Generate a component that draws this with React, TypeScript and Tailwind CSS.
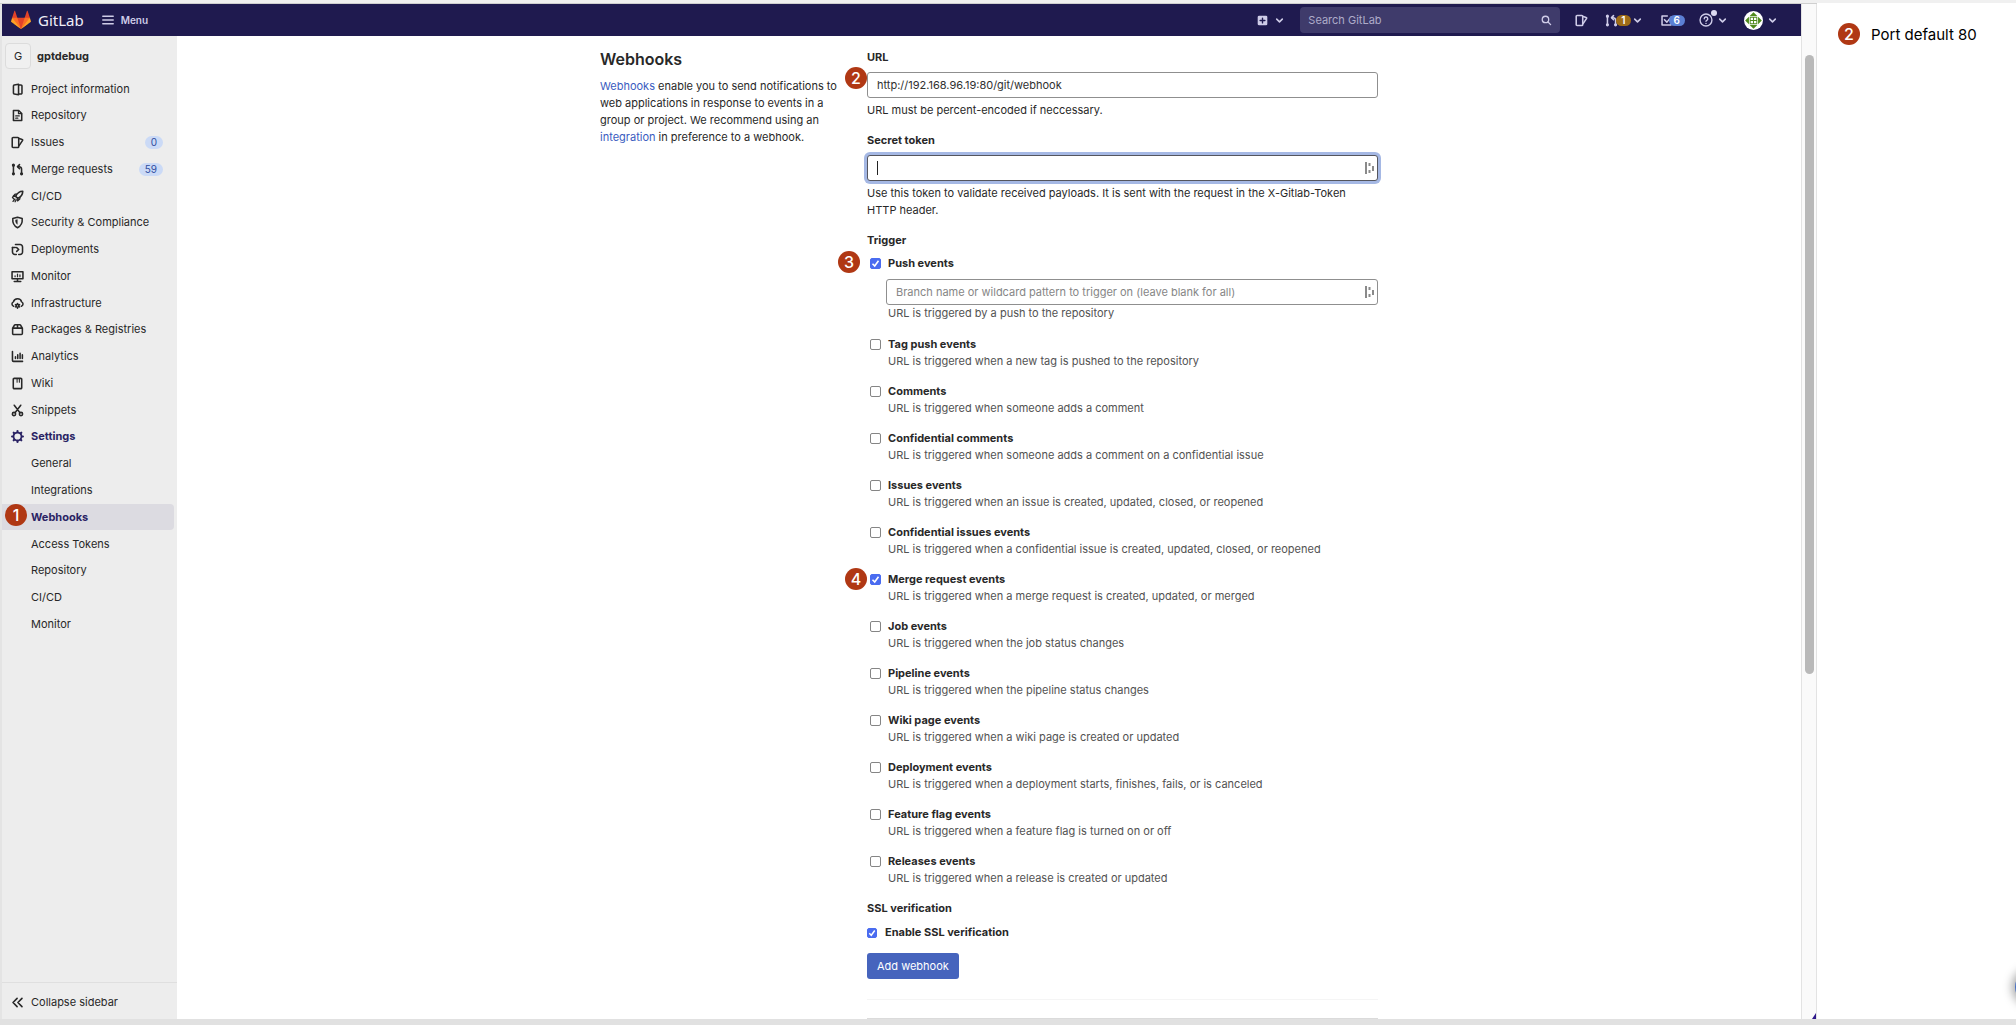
import type { ReactNode } from "react";

function Svg({ className, children }: { className?: string; children: ReactNode }) {
  return (
    <svg
      viewBox="0 0 16 16"
      aria-hidden="true"
      className={className ?? "size-[13px] shrink-0"}
      fill="none"
      stroke="currentColor"
      strokeWidth="1.9"
      strokeLinecap="round"
      strokeLinejoin="round"
    >
      {children}
    </svg>
  );
}

const issuesIcon = (
  <>
    <path d="M2.500 1.900h6a1 1 0 0 1 1 1v10.200a1 1 0 0 1-1 1h-6a1 1 0 0 1-1-1V2.900a1 1 0 0 1 1-1z" />
    <path d="M10 3l3.800 1.300a.8.8 0 0 1 .5 1.100L10.200 11.500" />
  </>
);

const mergeIcon = (
  <>
    <path d="M3 3v10M13 13V7.500a3 3 0 0 0-3-3H8.500" />
    <path d="M10.500 2L8 4.500 10.500 7" />
    <circle cx="3" cy="2.700" r="1" fill="currentColor" />
    <circle cx="3" cy="13.300" r="1" fill="currentColor" />
    <circle cx="13" cy="13.300" r="1" fill="currentColor" />
  </>
);

const icons: Record<string, ReactNode> = {
  project: (
    <>
      <path d="M9.300 1.600v12.800L4 13.500a1.200 1.200 0 0 1-1-1.200V3.700a1.200 1.200 0 0 1 1-1.200z" />
      <path d="M9.500 2.500h2.800a1.200 1.200 0 0 1 1.200 1.200v8.600a1.200 1.200 0 0 1-1.200 1.200H9.500" />
    </>
  ),
  repository: (
    <>
      <path d="M3 1.800h6.500L13.200 5.500v8.700H3z" />
      <path d="M9.200 2v3.800H13M5.800 8.500h4.400M5.800 11.300h2.600" strokeWidth="1.500" />
    </>
  ),
  issues: issuesIcon,
  merge: mergeIcon,
  rocket: (
    <>
      <path d="M14.500 1.500c-4 0-7 2.300-8.800 6.300l2.500 2.500c4-1.800 6.300-4.800 6.300-8.800z" />
      <path d="M5.800 7.500L2.500 8 5 5.200l2-.2M8.500 10.200L8 13.500l2.800-2.500.2-2M4 11.500L1.800 9.300M4.800 11.200L2.500 14M6.500 12L5 14.500" strokeWidth="1.600" />
    </>
  ),
  shield: (
    <>
      <path d="M8 1.500l5.800 1.700c.4 5.300-1.300 9-5.800 11.300C3.500 12.200 1.800 8.500 2.200 3.200z" />
      <path d="M7.800 4.500v5.800C6.300 9 5.500 7.500 5.500 5.300z" fill="currentColor" strokeWidth="0.500" />
    </>
  ),
  deployments: (
    <>
      <path d="M5.500 1.900h5.700a3 3 0 0 1 3 3v6.200a3 3 0 0 1-3 3H9.500M6.500 14.100H4.800a3 3 0 0 1-3-3V5.500" />
      <path d="M1.800 5.500h3.500M7 5.700L9.500 8 7 10.300" />
    </>
  ),
  monitor: (
    <>
      <path d="M1.300 2.200h13.400v8.600H1.300zM4 14.200h8M8 11v3" />
      <path d="M5 7.200v1M8 5v3.200M11 6v2.200" strokeWidth="1.500" />
    </>
  ),
  cloud: (
    <>
      <path d="M3.200 11.300A2.800 2.800 0 0 1 3 6c.6-2.300 2.700-3.800 5-3.800S12.500 3.700 13 6a2.800 2.800 0 0 1-.2 5.300" />
      <circle cx="8" cy="10.800" r="1.700" />
      <path d="M8 8v.6M8 13v.7M5.500 9.400l.6.300M10.500 9.400l-.6.300M5.500 12.200l.6-.3M10.500 12.200l-.6-.3" />
    </>
  ),
  package: (
    <path d="M2 6.300h12v6.500a1.300 1.300 0 0 1-1.300 1.300H3.300A1.300 1.300 0 0 1 2 12.800zM2.200 6l2-3.200a1.300 1.300 0 0 1 1-.7h5.600a1.300 1.300 0 0 1 1 .7l2 3.200M8 2.300V6" />
  ),
  chart: <path d="M1.800 1.800v11a1.200 1.200 0 0 0 1.200 1.200h11.200M5.500 8.300v2.200M8.300 6v4.500M11.200 4v6.500M14 6v4.500" />,
  book: (
    <>
      <path d="M4 1.700h8a1.200 1.200 0 0 1 1.200 1.200v10.200a1.200 1.200 0 0 1-1.200 1.200H4a1.200 1.200 0 0 1-1.200-1.200V2.900A1.200 1.200 0 0 1 4 1.700z" />
      <path d="M7.500 2v4.500M10.300 2v4.500" strokeWidth="1.300" />
    </>
  ),
  snippets: (
    <>
      <path d="M4 1.500l6.800 9M12 1.500L5.200 10.500" />
      <circle cx="3.700" cy="12.300" r="2" />
      <circle cx="12.300" cy="12.300" r="2" />
    </>
  ),
  settings: (
    <>
      <circle cx="8" cy="8" r="4.900" strokeWidth="2.200" />
      <path
        d="M8 1.300v1M8 13.700v1M1.300 8h1M13.700 8h1M3.300 3.300l.7.700M12 12l.7.700M3.300 12.700l.7-.7M12 4l.7-.7"
        strokeWidth="2.600"
      />
    </>
  ),
  collapse: <path d="M7.500 3L2.500 8l5 5M13.500 3l-5 5 5 5" strokeWidth="2" />,
};

function Chevron() {
  return (
    <Svg className="size-[9px] shrink-0">
      <path d="M3 5.500L8 10.500l5-5" strokeWidth="2.800" />
    </Svg>
  );
}

function Tanuki() {
  return (
    <svg viewBox="0 0 36 36" aria-hidden="true" className="size-5">
      <path fill="#e24329" d="M2 14l9.380 9v-9l-4-12.280c-.205-.632-1.176-.632-1.380 0z" />
      <path fill="#e24329" d="M34 14l-9.380 9v-9l4-12.280c.205-.632 1.176-.632 1.380 0z" />
      <path fill="#e24329" d="M18 34.380L3 14h30z" />
      <path fill="#fc6d26" d="M18 34.380L11.380 14H2l4 11z" />
      <path fill="#fc6d26" d="M18 34.380L24.620 14H34l-4 11z" />
      <path fill="#fca326" d="M2 14L.1 20.160c-.18.565 0 1.200.5 1.560l17.420 12.660z" />
      <path fill="#fca326" d="M34 14l1.900 6.160c.18.565 0 1.200-.5 1.560L18 34.380z" />
    </svg>
  );
}

function Step({ n, className }: { n: number; className?: string }) {
  return (
    <span
      className={`flex size-[22px] items-center justify-center rounded-full bg-[#b03814] text-base font-medium text-white ${className ?? ""}`}
    >
      {n}
    </span>
  );
}

function Header() {
  return (
    <header className="flex h-8 shrink-0 items-center bg-[#1f1a4f] pr-6 pl-[9px] text-[#cfcce8]">
      <a href="#home" className="flex items-center gap-[7px]">
        <Tanuki />
        <span className="font-['Noto_Sans',sans-serif] text-[15px] font-normal text-[#f0eef8]">GitLab</span>
      </a>
      <button type="button" className="ml-[18px] flex items-center gap-[7px] text-[10px] font-semibold">
        <Svg className="size-3">
          <path d="M1 3h14M1 8h14M1 13h14" strokeWidth="1.800" />
        </Svg>
        Menu
      </button>
      <div className="ml-auto flex items-center">
        <button type="button" aria-label="Create new" className="flex items-center gap-[7px]">
          <Svg className="size-[11px]">
            <rect x="1" y="1" width="14" height="14" rx="2" fill="currentColor" stroke="none" />
            <path d="M8 4.500v7M4.500 8h7" stroke="#1f1a4f" strokeWidth="2" />
          </Svg>
          <Chevron />
        </button>
        <div className="ml-4 flex h-[26px] w-[260px] items-center rounded bg-[#3f3b6b] px-2">
          <input
            aria-label="Search GitLab"
            placeholder="Search GitLab"
            className="min-w-0 flex-1 bg-transparent text-[11px] outline-none placeholder:text-[#aeabc9]"
          />
          <Svg className="size-[11px]">
            <circle cx="6.500" cy="6.500" r="4.700" />
            <path d="M10.200 10.200L14 14" />
          </Svg>
        </div>
        <a href="#issues" aria-label="Issues" className="ml-[15px]">
          <Svg>{issuesIcon}</Svg>
        </a>
        <button type="button" aria-label="Merge requests" className="ml-[17px] flex items-center">
          <Svg>{mergeIcon}</Svg>
          <span className="-ml-[2px] rounded-full bg-[#9e6c17] px-[5px] text-[10px] leading-[11px] font-semibold text-white">
            1
          </span>
          <span className="ml-[2px]">
            <Chevron />
          </span>
        </button>
        <a href="#todos" aria-label="To-do list" className="ml-[18px] flex items-center">
          <Svg>
            <path d="M13.500 9v4.500h-11V2.500H9M5.500 7l3 3L14 3.500" />
          </Svg>
          <span className="-ml-1 rounded-full bg-[#5b7fd4] px-[5px] text-[10px] leading-[11px] font-semibold text-white">6</span>
        </a>
        <button type="button" aria-label="Help" className="relative ml-[14px] flex items-center gap-[5px]">
          <Svg className="size-[14px]">
            <circle cx="8" cy="8" r="6.800" strokeWidth="1.600" />
            <path d="M6 6.500a2 2 0 1 1 2.900 1.800c-.6.300-.9.600-.9 1.200M8 11.800v.1" strokeWidth="1.600" />
          </Svg>
          <span className="absolute -top-[3px] left-3 size-[6px] rounded-full bg-[#dddaf2]" />
          <Chevron />
        </button>
        <button type="button" aria-label="Account" className="ml-[17px] flex items-center gap-[5px]">
          <svg viewBox="0 0 20 20" aria-hidden="true" className="size-[19px]">
            <circle cx="10" cy="10" r="10" fill="#fff" />
            <path fill="#4f8a1c" d="M6 5.200L10 1.200l4 4zM6 14.800l4 4 4-4zM5.200 6v8l-4-4zM14.800 6v8l4-4z" />
            <path fill="#4f8a1c" d="M6 6h8v8H6z" />
            <path fill="#fff" d="M7 7h2.500v2.500H7zM10.500 7H13v2.500h-2.500zM7 10.500h2.500V13H7zM10.500 10.500H13V13h-2.500z" />
          </svg>
          <Chevron />
        </button>
      </div>
    </header>
  );
}

const nav: { label: string; icon?: string; count?: number }[] = [
  { label: "Project information", icon: "project" },
  { label: "Repository", icon: "repository" },
  { label: "Issues", icon: "issues", count: 0 },
  { label: "Merge requests", icon: "merge", count: 59 },
  { label: "CI/CD", icon: "rocket" },
  { label: "Security & Compliance", icon: "shield" },
  { label: "Deployments", icon: "deployments" },
  { label: "Monitor", icon: "monitor" },
  { label: "Infrastructure", icon: "cloud" },
  { label: "Packages & Registries", icon: "package" },
  { label: "Analytics", icon: "chart" },
  { label: "Wiki", icon: "book" },
  { label: "Snippets", icon: "snippets" },
  { label: "Settings", icon: "settings" },
  { label: "General" },
  { label: "Integrations" },
  { label: "Webhooks" },
  { label: "Access Tokens" },
  { label: "Repository" },
  { label: "CI/CD" },
  { label: "Monitor" },
];

function Sidebar() {
  return (
    <aside className="flex w-[175px] shrink-0 flex-col bg-[#ededed]">
      <a href="#project" className="mt-[7px] ml-[3px] flex items-center gap-[6px] font-bold">
        <span className="flex size-[26px] items-center justify-center rounded border border-[#dcdcdc] bg-[#f0f0f0] font-normal">
          G
        </span>
        gptdebug
      </a>
      <ul className="mt-[7px] flex h-[562px] flex-col">
        {nav.map((item, i) => {
          const active = item.label === "Webhooks";
          const bold = active || item.label === "Settings";
          return (
            <li key={i} className="relative mr-[3px] flex-1">
              <a
                href="#nav"
                className={`flex h-[26px] items-center rounded-r pr-[11px] ${active ? "bg-[#dcdbe1]" : ""} ${bold ? "font-bold text-[#2a2364]" : ""} ${item.icon ? "gap-[7px] pl-[9px]" : "pl-[29px]"}`}
              >
                {item.icon && <Svg>{icons[item.icon]}</Svg>}
                {item.label}
                {item.count !== undefined && (
                  <span className="ml-auto rounded-full bg-[#cbdaf6] px-[6px] text-[10px] leading-[13px] text-[#2f4da0]">
                    {item.count}
                  </span>
                )}
              </a>
              {active && <Step n={1} className="absolute top-0 left-[3px]" />}
            </li>
          );
        })}
      </ul>
      <button type="button" className="mt-auto flex h-[37px] items-center gap-[7px] border-t border-[#dfdfdf] pt-[2px] pl-[9px]">
        <Svg>{icons.collapse}</Svg>
        Collapse sidebar
      </button>
    </aside>
  );
}

function FieldMark() {
  return (
    <svg viewBox="0 0 9 12" aria-hidden="true" className="absolute top-[7px] right-1 h-3 w-[9px]" stroke="#8a8a8a" strokeWidth="2">
      <path d="M1 0v12M4.500 1v3M4.500 8v3M8 4v5" />
    </svg>
  );
}

const fieldClass =
  "block h-[26px] w-full rounded-[3px] border border-[#8f8f8f] bg-white px-[9px] text-[#303030] outline-none placeholder:text-[#868686]";

const events: { title: string; text: string; checked?: boolean }[] = [
  { title: "Tag push events", text: "URL is triggered when a new tag is pushed to the repository" },
  { title: "Comments", text: "URL is triggered when someone adds a comment" },
  { title: "Confidential comments", text: "URL is triggered when someone adds a comment on a confidential issue" },
  { title: "Issues events", text: "URL is triggered when an issue is created, updated, closed, or reopened" },
  {
    title: "Confidential issues events",
    text: "URL is triggered when a confidential issue is created, updated, closed, or reopened",
  },
  {
    title: "Merge request events",
    text: "URL is triggered when a merge request is created, updated, or merged",
    checked: true,
  },
  { title: "Job events", text: "URL is triggered when the job status changes" },
  { title: "Pipeline events", text: "URL is triggered when the pipeline status changes" },
  { title: "Wiki page events", text: "URL is triggered when a wiki page is created or updated" },
  { title: "Deployment events", text: "URL is triggered when a deployment starts, finishes, fails, or is canceled" },
  { title: "Feature flag events", text: "URL is triggered when a feature flag is turned on or off" },
  { title: "Releases events", text: "URL is triggered when a release is created or updated" },
];

function Check({ id, checked, className }: { id: string; checked?: boolean; className?: string }) {
  return (
    <span className={`relative flex shrink-0 ${className ?? "size-[11px]"}`}>
      <input
        id={id}
        type="checkbox"
        defaultChecked={checked}
        className="peer size-full appearance-none rounded-[2px] border border-[#858585] bg-white checked:border-[#4a6cf0] checked:bg-[#4a6cf0]"
      />
      <svg
        viewBox="0 0 11 11"
        aria-hidden="true"
        className="pointer-events-none absolute inset-0 hidden size-full peer-checked:block"
        fill="none"
        stroke="#fff"
        strokeWidth="1.600"
      >
        <path d="M2.500 5.800l2.200 2.200L8.500 2.800" />
      </svg>
    </span>
  );
}

function Form() {
  return (
    <form>
      <div className="relative">
        <label htmlFor="url" className="block font-bold">
          URL
        </label>
        <Step n={2} className="absolute top-[18px] -left-[22px]" />
        <input id="url" defaultValue="http://192.168.96.19:80/git/webhook" className={`mt-[6px] ${fieldClass}`} />
        <p className="mt-1">URL must be percent-encoded if neccessary.</p>
      </div>
      <label htmlFor="token" className="mt-[13px] block font-bold">
        Secret token
      </label>
      <div className="relative mt-[6px]">
        <input
          id="token"
          className="block h-[26px] w-full rounded-[3px] border border-[#55565e] bg-white px-[9px] ring-[3px] ring-[#a5b8e4] outline-none"
        />
        <span className="absolute top-[6px] left-[10px] h-[14px] w-px bg-[#222]" />
        <FieldMark />
      </div>
      <p className="mt-1">
        Use this token to validate received payloads. It is sent with the request in the X-Gitlab-Token HTTP header.
      </p>
      <fieldset className="mt-[13px]">
        <legend className="font-bold">Trigger</legend>
        <div className="mt-[6px] pl-[3px]">
          <div className="relative flex items-center gap-[7px]">
            <Step n={3} className="absolute -top-1 -left-8" />
            <Check id="push" checked />
            <label htmlFor="push" className="font-bold">
              Push events
            </label>
          </div>
          <div className="relative mt-[7px] ml-4">
            <input
              aria-label="Branch name or wildcard pattern"
              placeholder="Branch name or wildcard pattern to trigger on (leave blank for all)"
              className={fieldClass}
            />
            <FieldMark />
          </div>
          <p className="ml-[18px] text-[#525252]">URL is triggered by a push to the repository</p>
        </div>
        <ul className="mt-[14px] flex flex-col gap-[13px] pl-[3px]">
          {events.map((e, i) => (
            <li key={e.title} className="relative">
              {e.checked && <Step n={4} className="absolute -top-[3px] -left-[25px]" />}
              <div className="flex items-center gap-[7px]">
                <Check id={`event-${i}`} checked={e.checked} />
                <label htmlFor={`event-${i}`} className="font-bold">
                  {e.title}
                </label>
              </div>
              <p className="ml-[18px] text-[#525252]">{e.text}</p>
            </li>
          ))}
        </ul>
      </fieldset>
      <fieldset className="mt-[13px]">
        <legend className="font-bold">SSL verification</legend>
        <div className="mt-[7px] flex items-center gap-2">
          <Check id="ssl" checked className="size-[10px]" />
          <label htmlFor="ssl" className="font-bold">
            Enable SSL verification
          </label>
        </div>
      </fieldset>
      <button type="submit" className="mt-3 flex h-[26px] items-center rounded-[3px] bg-[#4664bd] px-[10px] text-white">
        Add webhook
      </button>
      <hr className="mt-5 border-[#f5f5f5]" />
      <hr className="mt-[18px] border-[#dbdbdb]" />
    </form>
  );
}

export default function App() {
  return (
    <div className="flex h-screen overflow-hidden bg-white font-['Inter',sans-serif] text-[11px] leading-[17px] text-[#282828]">
      <div className="flex min-w-0 flex-1 flex-col">
        <div className="h-1 shrink-0 border-b border-[#cfcfcf] bg-[#f0f0f0]" />
        <div className="flex min-h-0 flex-1">
          <div className="w-[2px] shrink-0 bg-[#e4e4e4]" />
          <div className="flex min-w-0 flex-1 flex-col">
            <Header />
            <div className="flex min-h-0 flex-1">
              <Sidebar />
              <main className="min-w-0 flex-1 overflow-hidden px-6 pt-[13px]">
                <div className="mx-auto grid max-w-[778px] grid-cols-[241px_1fr] gap-[26px]">
                  <section>
                    <h1 className="text-base leading-5 font-semibold">Webhooks</h1>
                    <p className="mt-[9px]">
                      <a href="#webhooks" className="text-[#3a5cc0]">
                        Webhooks
                      </a>{" "}
                      enable you to send notifications to web applications in response to events in a group or project. We
                      recommend using an{" "}
                      <a href="#integration" className="text-[#3a5cc0]">
                        integration
                      </a>{" "}
                      in preference to a webhook.
                    </p>
                  </section>
                  <Form />
                </div>
              </main>
            </div>
          </div>
          <div className="relative w-4 shrink-0 border-x border-[#e3e3e3] bg-[#fafafa] pt-[51px]">
            <div className="mx-auto h-[619px] w-[9px] rounded-full bg-[#b9b9b9]" />
            <svg viewBox="0 0 4 6" aria-hidden="true" className="absolute right-0 bottom-0 h-[6px] w-1">
              <path d="M4 0v6H0z" fill="#2f1a8c" />
            </svg>
          </div>
        </div>
        <div className="h-[6px] shrink-0 bg-[#e1e1e1]" />
      </div>
      <aside className="relative flex w-[199px] shrink-0 flex-col border-t-3 border-b-6 border-t-[#f0f0f0] border-b-[#e1e1e1]">
        <p className="mt-5 ml-[21px] flex items-center gap-[11px] text-[15px] text-black">
          <Step n={2} />
          Port default 80
        </p>
        <span className="absolute -right-[31px] bottom-4 size-8 rounded-full bg-[#4a72c4] shadow-[0_0_10px_3px_rgba(0,0,0,0.35)]" />
      </aside>
    </div>
  );
}
